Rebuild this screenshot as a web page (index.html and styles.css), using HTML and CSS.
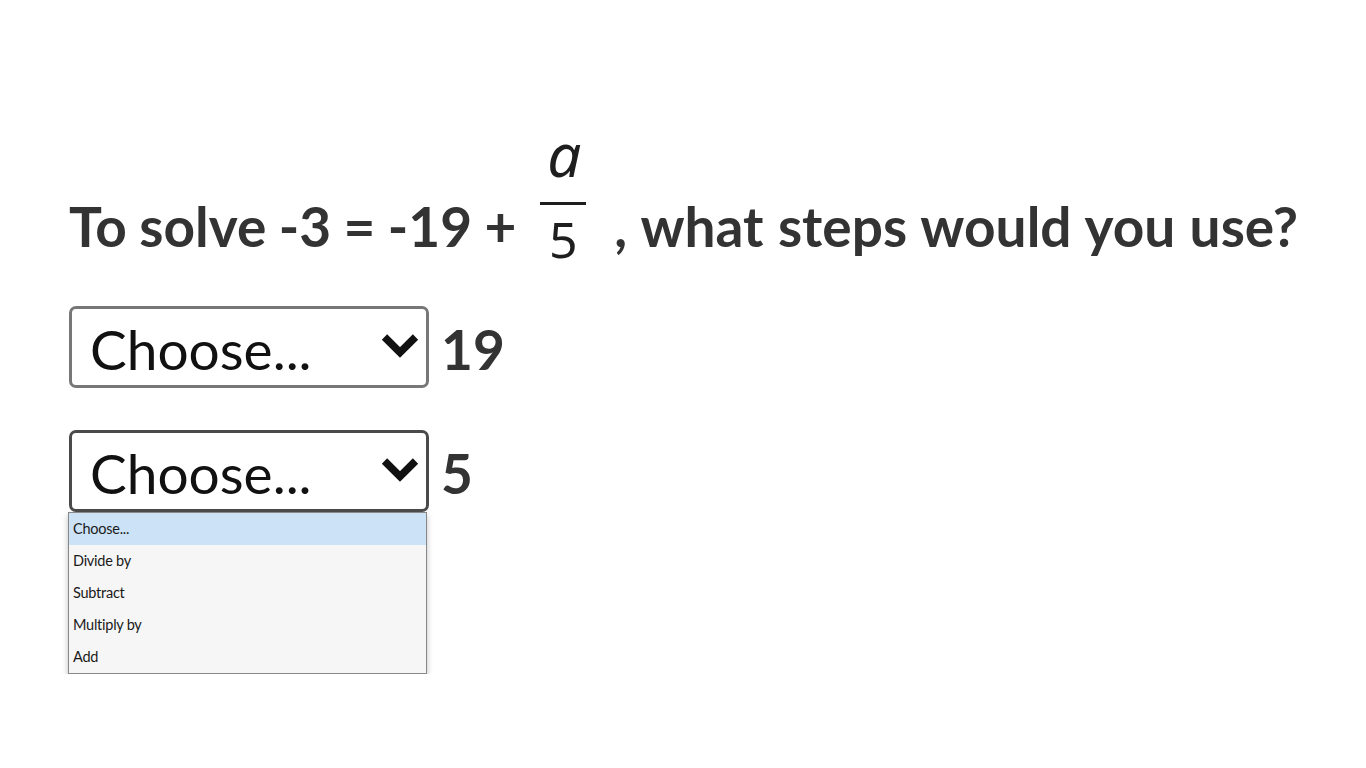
FILE: index.html
```html
<!DOCTYPE html>
<html>
<head>
<meta charset="utf-8">
<link rel="stylesheet" href="styles.css">
</head>
<body>
<main class="page">
  <h1 class="question">
    <span class="qtext lead">To solve -3 = -19 +</span>
    <span class="frac">
      <span class="num">a</span>
      <span class="bar"></span>
      <span class="den">5</span>
    </span>
    <span class="qtext tail">, what steps would you use?</span>
  </h1>
  <div class="row">
    <div class="select">
      <span class="sel-text">Choose...</span>
      <svg class="chev" width="40" height="28" viewBox="0 0 40 28"><path d="M4.5 5 L20 20.5 L35.5 5" fill="none" stroke="#111" stroke-width="7.5" stroke-linejoin="miter"/></svg>
    </div>
    <span class="val">19</span>
  </div>
  <div class="row row2">
    <div class="select focused">
      <span class="sel-text">Choose...</span>
      <svg class="chev" width="40" height="28" viewBox="0 0 40 28"><path d="M4.5 5 L20 20.5 L35.5 5" fill="none" stroke="#111" stroke-width="7.5" stroke-linejoin="miter"/></svg>
    </div>
    <span class="val">5</span>
  </div>
  <div class="options">
    <div class="opt hl">Choose...</div>
    <div class="opt">Divide by</div>
    <div class="opt">Subtract</div>
    <div class="opt">Multiply by</div>
    <div class="opt">Add</div>
  </div>
</main>
</body>
</html>
```
FILE: styles.css
```css
html, body {
  margin: 0;
  padding: 0;
  background: #fff;
}
body {
  font-family: Lato, "Open Sans", sans-serif;
  color: #333;
}
.page {
  padding: 136px 0 0 69px;
}
.question {
  margin: 0;
  display: flex;
  align-items: flex-start;
  font-size: 55px;
  font-weight: 700;
  line-height: 55px;
  color: #333;
  white-space: nowrap;
}
.qtext {
  margin-top: 63px;
}
.lead {
  word-spacing: -1px;
}
.tail {
  word-spacing: 1px;
}
.frac {
  display: flex;
  flex-direction: column;
  align-items: center;
  width: 46px;
  margin: 0 28px 0 24px;
  color: #1e1e1e;
}
.num {
  font-family: "Noto Sans", sans-serif;
  font-style: italic;
  font-weight: 400;
  font-size: 60px;
  line-height: 44px;
  height: 44px;
  margin-top: -4px;
  padding-left: 2px;
}
.bar {
  width: 46px;
  height: 3px;
  background: #1e1e1e;
  margin-top: 26px;
}
.den {
  font-family: "Noto Sans", sans-serif;
  font-weight: 400;
  font-size: 50px;
  line-height: 42px;
  height: 42px;
  margin-top: 13px;
}
.row {
  display: flex;
  align-items: center;
  gap: 12px;
  margin-top: 46px;
}
.row2 {
  margin-top: 42px;
}
.select {
  box-sizing: border-box;
  width: 360px;
  height: 82px;
  border: 3px solid #777;
  border-radius: 7px;
  display: flex;
  align-items: center;
  padding: 0 6px 0 18px;
  background: #fff;
}
.select.focused {
  border-color: #4a4a4a;
}
.sel-text {
  flex: 1;
  font-size: 55px;
  font-weight: 400;
  color: #111;
  line-height: 55px;
  padding-top: 5px;
}
.chev {
  display: block;
  margin-top: -2px;
}
.val {
  font-size: 55px;
  font-weight: 700;
  color: #333;
  line-height: 55px;
  padding-top: 4px;
}
.options {
  width: 359px;
  box-sizing: border-box;
  margin-left: -1px;
  background: #f6f6f6;
  border: 1px solid #888;
  box-shadow: 0 3px 6px rgba(0, 0, 0, 0.25);
}
.opt {
  height: 32px;
  line-height: 32px;
  padding-left: 4px;
  font-size: 14.5px;
  letter-spacing: -0.25px;
  color: #1a1a1a;
}
.opt.hl {
  background: #cce3f7;
}
```
